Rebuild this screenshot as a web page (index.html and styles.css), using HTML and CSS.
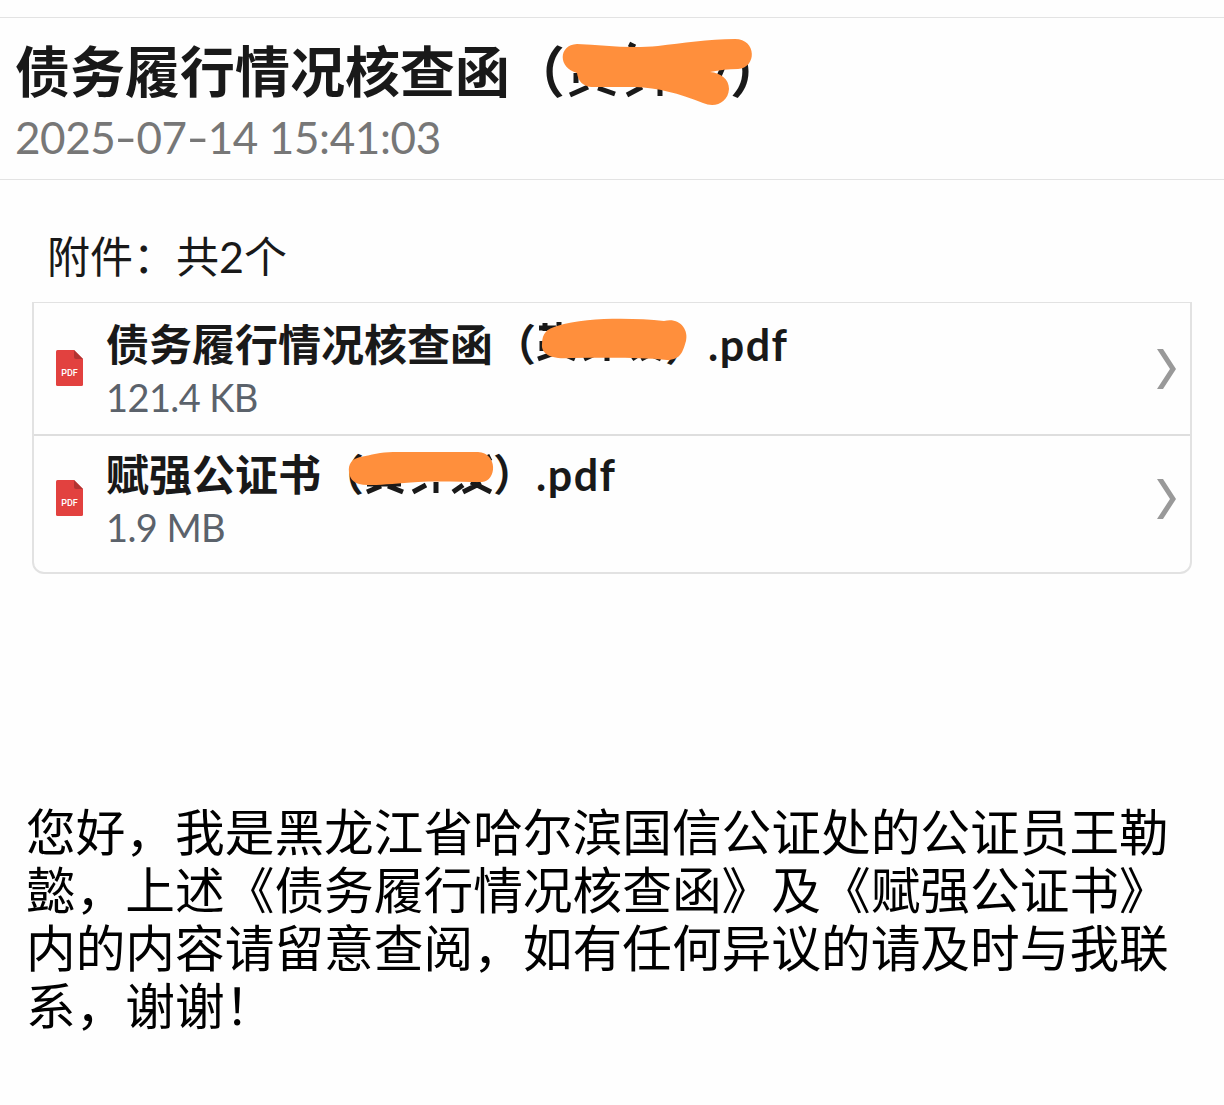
FILE: index.html
```html
<!DOCTYPE html>
<html lang="zh-CN">
<head>
    <meta charset="UTF-8">
    <meta name="viewport" content="width=device-width, initial-scale=1.0">
    <title>债务履行情况核查函</title>
    <link rel="stylesheet" href="styles.css">
</head>
<body>
    <header class="mail-header">
        <h1>债务履行情况核查函（<span class="name"><svg class="scribble title-scribble" width="200" height="76" viewBox="0 0 200 76">
            <g class="strokes">
                <path d="M13 38v10M7 60l18-8M35 53l17 6M64 60l15-8M97 51v10M66 9l6 3M154 46l6-14" />
            </g>
            <path class="marker" d="M14 9C40 10 65 14 95 11C120 8 145 4 172 4C194 4 194 33 175 34C165 34 157 35 147 37C158 38 166 44 166 54C165 68 152 73 140 68C115 58 95 53 72 52L28 52C20 51 15 46 14 38C-5 33 -5 10 14 9Z" />
        </svg></span>）</h1>
        <div class="date">2025<i>-</i>07<i>-</i>14 15:41:03</div>
    </header>

    <section class="attachments">
        <div class="attach-title">附件：共<span>2</span>个</div>
        <ul class="attach-list">
            <li class="attach-item">
                <svg class="pdf-icon" width="27" height="36" viewBox="0 0 27 36">
                    <path d="M1.500 0H18L27 9V34.500Q27 36 25.500 36H1.500Q0 36 0 34.500V1.500Q0 0 1.500 0Z" fill="#e2413f" />
                    <path d="M18 0L27 9H20Q18 9 18 7Z" fill="#b23432" />
                    <text x="13.500" y="25.500" text-anchor="middle">PDF</text>
                </svg>
                <div class="attach-info">
                    <div class="file-name">债务履行情况核查函（<span class="name"><svg class="scribble" width="160" height="60" viewBox="0 0 160 60">
                        <g class="strokes">
                            <path d="M6 11h17M12 6v8M26 5v6M9 24v10M5 42l14-5M28 36l14 6M51 42l13-6M74 35v9M99 42l9-6M108 42l10-5M117 37l11 5" />
                        </g>
                        <path class="marker" d="M24 9C55 0 100 1 131 4C146 0 156 12 153 24C150 34 148 43 134 43C105 40 70 41 38 41C15 43 8 35 9 27C9 16 14 12 24 9Z" />
                    </svg></span>）<span class="ext">.pdf</span></div>
                    <div class="file-size">121.4 KB</div>
                </div>
                <svg class="arrow" width="20" height="40" viewBox="0 0 20 40">
                    <path d="M0 0H6L19 20L6 40H0L13 20Z" />
                </svg>
            </li>
            <li class="attach-item">
                <svg class="pdf-icon" width="27" height="36" viewBox="0 0 27 36">
                    <path d="M1.500 0H18L27 9V34.500Q27 36 25.500 36H1.500Q0 36 0 34.500V1.500Q0 0 1.500 0Z" fill="#e2413f" />
                    <path d="M18 0L27 9H20Q18 9 18 7Z" fill="#b23432" />
                    <text x="13.500" y="25.500" text-anchor="middle">PDF</text>
                </svg>
                <div class="attach-info">
                    <div class="file-name">赋强公证书（<span class="name"><svg class="scribble scribble-left" width="160" height="60" viewBox="0 0 160 60">
                        <g class="strokes">
                            <path d="M24 37h34M24 45l14-6M45 39l15 6M70 45l13-7M93 35v11M110 45l10-7M120 45l18-9M128 35l20 10M144 8l3 6" />
                        </g>
                        <path class="marker" d="M17 10C28 8 38 5 50 5L135 5C155 6 154 34 139 35C120 35 95 34 75 35C55 36 42 38 28 38C12 39 7 33 6 25C5 17 9 12 17 10Z" />
                    </svg></span>）<span class="ext">.pdf</span></div>
                    <div class="file-size">1.9 MB</div>
                </div>
                <svg class="arrow" width="20" height="40" viewBox="0 0 20 40">
                    <path d="M0 0H6L19 20L6 40H0L13 20Z" />
                </svg>
            </li>
        </ul>
    </section>

    <p class="mail-body">您好，我是黑龙江省哈尔滨国信公证处的公证员王勒<br>懿，上述《债务履行情况核查函》及《赋强公证书》<br>内的内容请留意查阅，如有任何异议的请及时与我联<br>系，谢谢！</p>
</body>
</html>
```

FILE: styles.css
```css
* {
    box-sizing: border-box;
}
body {
    margin: 0;
    padding-top: 17px;
    background: #fefefe;
    color: #191919;
    font-family: 'Noto Sans CJK SC', sans-serif;
    text-spacing-trim: space-all;
}
.mail-header {
    height: 163px;
    padding: 17px 15px 0;
    border-top: 1px solid #e3e3e3;
    border-bottom: 1px solid #e3e3e3;
}
h1 {
    margin: 0;
    font-size: 55px;
    line-height: 66px;
    font-weight: 700;
    white-space: nowrap;
}
.date {
    margin-top: 4px;
    color: #777;
    font-family: Lato, sans-serif;
    font-size: 44px;
    line-height: 56px;
    letter-spacing: -0.4px;
    white-space: nowrap;
}
.date i {
    display: inline-block;
    width: 21px;
    text-align: center;
    font-style: normal;
    transform: scaleX(1.4);
}

/* blanked-out name, three characters wide */
.name {
    display: inline-block;
    position: relative;
    width: 3em;
    height: 1em;
    vertical-align: middle;
}
.scribble {
    position: absolute;
    left: -3px;
    top: -11px;
    z-index: 1;
    overflow: visible;
}
.title-scribble {
    left: -2px;
    top: -15px;
}
.scribble-left {
    left: -21px;
}
.scribble .marker {
    fill: #ff8f3c;
}
.strokes {
    fill: none;
    stroke: #191919;
    stroke-width: 5;
}

.attachments {
    padding: 44px 32px 0;
}
.attach-title {
    padding-left: 15px;
    font-size: 43px;
    line-height: 60px;
}
.attach-title span {
    font-family: Lato, sans-serif;
}
.attach-list {
    margin: 15px 0 0;
    padding: 0;
    list-style: none;
    border: 2px solid #e2e2e2;
    border-top-width: 1px;
    border-radius: 0 0 12px 12px;
}
.attach-item {
    display: flex;
    align-items: flex-start;
    height: 131px;
    padding: 12px 13px 0 22px;
}
.attach-item + .attach-item {
    height: 138px;
    padding-top: 9px;
    border-top: 2px solid #dedede;
}
.pdf-icon {
    margin-top: 35px;
}
.pdf-icon text {
    fill: #fff;
    font-family: Roboto, sans-serif;
    font-size: 9px;
    font-weight: 500;
}
.attach-info {
    flex: 1;
    margin-left: 23px;
}
.file-name {
    font-size: 43px;
    line-height: 54px;
    height: 56px;
    font-weight: 700;
    white-space: nowrap;
}
.ext {
    font-family: Lato, sans-serif;
    letter-spacing: 1.5px;
}
.file-size {
    color: #5b626b;
    font-family: Lato, sans-serif;
    font-size: 38px;
    line-height: 52px;
    letter-spacing: -0.6px;
}
.arrow {
    margin-top: 34px;
    fill: #999;
}

.mail-body {
    margin: 226px 0 0;
    padding-left: 26px;
    color: #000;
    font-size: 49.7px;
    line-height: 58px;
    white-space: nowrap;
}
```
